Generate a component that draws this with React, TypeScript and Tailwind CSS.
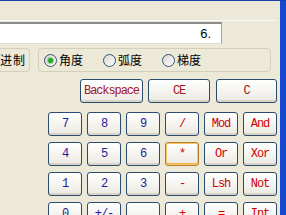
import React from 'react';

type Tone = 'num' | 'op' | 'clr';

const TONE: Record<Tone, string> = {
  num: 'text-[#1c1c96]',
  op: 'text-[#d00000]',
  clr: 'text-[#a3141c]',
};

function Key({ label, tone, w = 'w-[34px]', focus = false }: { label: string; tone: Tone; w?: string; focus?: boolean }) {
  return (
    <button
      className={`flex h-[24px] ${w} items-center justify-center rounded-[3px] border bg-linear-to-b from-white to-[#ebe9e1] text-[12px] leading-none tracking-[-1.1px] ${
        focus
          ? 'border-[#b07f2c] shadow-[inset_0_0_0_1px_#f9c667,inset_0_-2px_0_#f0b44a]'
          : 'border-[#2b4c6f] shadow-[inset_0_-2px_0_#d8d4c8]'
      } ${TONE[tone]}`}
      style={{ fontFamily: '"Liberation Mono", monospace' }}
    >
      {label}
    </button>
  );
}

function Radio({ label, checked = false }: { label: string; checked?: boolean }) {
  return (
    <div className="flex items-center">
      <span className="flex h-[13px] w-[13px] items-center justify-center rounded-full border border-[#2f5476] bg-linear-to-br from-[#d8d6cc] to-white">
        {checked && <span className="h-[5px] w-[5px] rounded-full bg-[#2aa52a] shadow-[0_0_0_1px_#8fd18f]" />}
      </span>
      <span className="ml-[2px] text-[12px] leading-none text-black">{label}</span>
    </div>
  );
}

const GRID: { label: string; tone: Tone; focus?: boolean }[] = [
  { label: '7', tone: 'num' },
  { label: '8', tone: 'num' },
  { label: '9', tone: 'num' },
  { label: '/', tone: 'op' },
  { label: 'Mod', tone: 'op' },
  { label: 'And', tone: 'op' },
  { label: '4', tone: 'num' },
  { label: '5', tone: 'num' },
  { label: '6', tone: 'num' },
  { label: '*', tone: 'op', focus: true },
  { label: 'Or', tone: 'op' },
  { label: 'Xor', tone: 'op' },
  { label: '1', tone: 'num' },
  { label: '2', tone: 'num' },
  { label: '3', tone: 'num' },
  { label: '-', tone: 'op' },
  { label: 'Lsh', tone: 'op' },
  { label: 'Not', tone: 'op' },
  { label: '0', tone: 'num' },
  { label: '+/-', tone: 'num' },
  { label: '.', tone: 'num' },
  { label: '+', tone: 'op' },
  { label: '=', tone: 'op' },
  { label: 'Int', tone: 'op' },
];

export default function App() {
  return (
    <div
      className="flex h-[215px] w-[286px] flex-col overflow-hidden bg-[#ece9d8]"
      style={{ fontFamily: '"Noto Sans CJK SC", "Liberation Sans", sans-serif' }}
    >
      <div className="h-px shrink-0 bg-[#1a3fa6]" />
      <div className="flex min-h-0 flex-1">
        <div className="flex w-[280px] flex-col">
          {/* menu bar */}
          <div className="h-[19px] shrink-0" />
          <div className="h-px w-[276px] shrink-0 bg-[#faf9f4]" />

          {/* display */}
          <div
            className="mt-px flex h-[22px] w-[222px] shrink-0 items-center justify-end border-t-2 border-r border-b border-t-[#8a8a8a] border-r-[#a4a4a4] border-b-[#dedbd0] bg-white pr-[10px] text-[13px] text-black"
            style={{ fontFamily: '"Liberation Sans", sans-serif' }}
          >
            6.
          </div>

          {/* radio groups */}
          <div className="mt-[4px] flex h-[24px] shrink-0">
            <div className="ml-[-40px] flex w-[70px] items-center justify-end rounded-[4px] border border-[#d2cfbb] pr-[3px] text-[12px] leading-none tracking-[1px] text-black">
              十进制
            </div>
            <div className="ml-[8px] flex w-[233px] items-center gap-[20px] rounded-[4px] border border-[#d2cfbb] pl-[5px]">
              <Radio label="角度" checked />
              <Radio label="弧度" />
              <Radio label="梯度" />
            </div>
          </div>

          {/* clear row */}
          <div className="mt-[7px] ml-[80px] flex shrink-0">
            <Key label="Backspace" tone="clr" w="w-[63px]" />
            <div className="ml-[5px]">
              <Key label="CE" tone="clr" w="w-[62px]" />
            </div>
            <div className="ml-[6px]">
              <Key label="C" tone="clr" w="w-[61px]" />
            </div>
          </div>

          {/* keypad */}
          <div className="mt-[9px] ml-[48px] grid shrink-0 grid-cols-[repeat(6,34px)] gap-x-[5px] gap-y-[6px]">
            {GRID.map((k) => (
              <Key key={k.label} label={k.label} tone={k.tone} focus={k.focus} />
            ))}
          </div>
        </div>
        <div className="w-[6px] shrink-0 bg-[#1648cf]" />
      </div>
    </div>
  );
}
